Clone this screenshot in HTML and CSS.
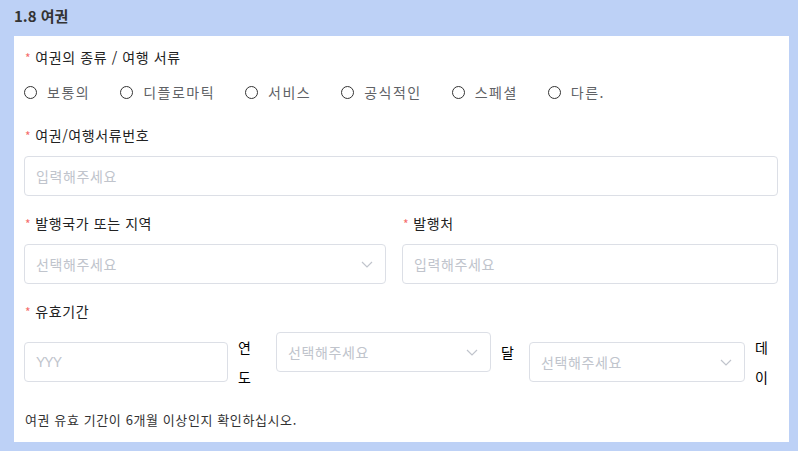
FILE: index.html
```html
<!DOCTYPE html>
<html lang="ko">
<head>
    <meta charset="UTF-8">
    <title>1.8 여권</title>
    <link rel="stylesheet" href="styles.css">
</head>
<body>
    <div class="section">
        <h2 class="section-title">1.8 여권</h2>
        <div class="panel">
            <!-- 여권 종류 -->
            <div class="field">
                <div class="label"><span class="req">*</span>여권의 종류 / 여행 서류</div>
                <div class="radio-group">
                    <label class="radio"><span class="radio-dot"></span>보통의</label>
                    <label class="radio"><span class="radio-dot"></span>디플로마틱</label>
                    <label class="radio"><span class="radio-dot"></span>서비스</label>
                    <label class="radio"><span class="radio-dot"></span>공식적인</label>
                    <label class="radio"><span class="radio-dot"></span>스페셜</label>
                    <label class="radio"><span class="radio-dot"></span>다른.</label>
                </div>
            </div>

            <div class="field">
                <div class="label"><span class="req">*</span>여권/여행서류번호</div>
                <div class="input"><span class="placeholder">입력해주세요</span></div>
            </div>

            <div class="field two-cols">
                <div>
                    <div class="label"><span class="req">*</span>발행국가 또는 지역</div>
                    <div class="input select">
                        <span class="placeholder">선택해주세요</span>
                        <svg class="chevron" width="12" height="7" viewBox="0 0 12 7"><path d="M1 1l5 5 5-5" fill="none" stroke="#c0c4cc" stroke-width="1.2"/></svg>
                    </div>
                </div>
                <div>
                    <div class="label"><span class="req">*</span>발행처</div>
                    <div class="input"><span class="placeholder">입력해주세요</span></div>
                </div>
            </div>

            <div class="field">
                <div class="label"><span class="req">*</span>유효기간</div>
                <div class="date-row">
                    <div class="date-group group-year">
                        <div class="input w-year"><span class="placeholder latin">YYY</span></div>
                        <span class="unit">연도</span>
                    </div>
                    <div class="date-group group-month">
                        <div class="input select w-month">
                            <span class="placeholder">선택해주세요</span>
                            <svg class="chevron" width="12" height="7" viewBox="0 0 12 7"><path d="M1 1l5 5 5-5" fill="none" stroke="#c0c4cc" stroke-width="1.2"/></svg>
                        </div>
                        <span class="unit">달</span>
                    </div>
                    <div class="date-group">
                        <div class="input select w-day">
                            <span class="placeholder">선택해주세요</span>
                            <svg class="chevron" width="12" height="7" viewBox="0 0 12 7"><path d="M1 1l5 5 5-5" fill="none" stroke="#c0c4cc" stroke-width="1.2"/></svg>
                        </div>
                        <span class="unit">데이</span>
                    </div>
                </div>
            </div>

            <p class="note">여권 유효 기간이 6개월 이상인지 확인하십시오.</p>
        </div>
    </div>
</body>
</html>
```

FILE: styles.css
```css
body {
    margin: 0;
    background-color: #bdd1f6;
    font-family: "Noto Sans CJK KR", "Noto Sans", sans-serif;
    color: #303133;
    letter-spacing: 0.6px;
}

.section {
    padding: 0 9px 7px 14px;
}

.section-title {
    margin: 0;
    height: 36px;
    line-height: 32px;
    font-size: 15px;
    font-weight: bold;
    color: #333;
    letter-spacing: 0;
}

.panel {
    background-color: #fff;
    padding: 10px 11px 12px 10px;
}

.field {
    margin-bottom: 16px;
}

.label {
    height: 22px;
    line-height: 22px;
    font-size: 14px;
    margin-bottom: 10px;
    color: #222;
}

.req {
    color: #f56c6c;
    font-size: 12px;
    margin: 0 4px 0 1px;
}

.radio-group {
    display: flex;
    height: 20px;
    align-items: center;
    margin-top: 14px;
    margin-bottom: 22px;
}

.radio {
    display: flex;
    align-items: center;
    margin-right: 30px;
    font-size: 14px;
    color: #606266;
    letter-spacing: 1.5px;
}

.radio-dot {
    width: 11px;
    height: 11px;
    border: 1px solid #333;
    border-radius: 50%;
    margin-right: 10px;
}

.input {
    display: flex;
    align-items: center;
    box-sizing: border-box;
    height: 40px;
    padding: 0 11px;
    border: 1px solid #dcdfe6;
    border-radius: 4px;
    font-size: 14px;
}

.placeholder {
    color: #c0c4cc;
    flex: 1;
}

.placeholder.latin {
    font-family: "Liberation Sans Narrow", "Liberation Sans", sans-serif;
    letter-spacing: -1px;
}

.chevron {
    margin-right: 1px;
}

.two-cols {
    display: grid;
    grid-template-columns: 362px 1fr;
    column-gap: 16px;
}

.date-row {
    display: flex;
    align-items: flex-start;
}

.date-group {
    display: flex;
    align-items: center;
}

.group-year {
    margin-right: 24px;
}

.group-month {
    margin-right: 14px;
}

.w-year { width: 204px; }
.w-month { width: 215px; }
.w-day { width: 216px; }

.unit {
    width: 14px;
    margin-left: 10px;
    font-size: 14px;
    line-height: 30px;
    color: #000;
}

.note {
    margin: 18px 0 0 1px;
    font-size: 13px;
    line-height: 20px;
    color: #333;
}
```
